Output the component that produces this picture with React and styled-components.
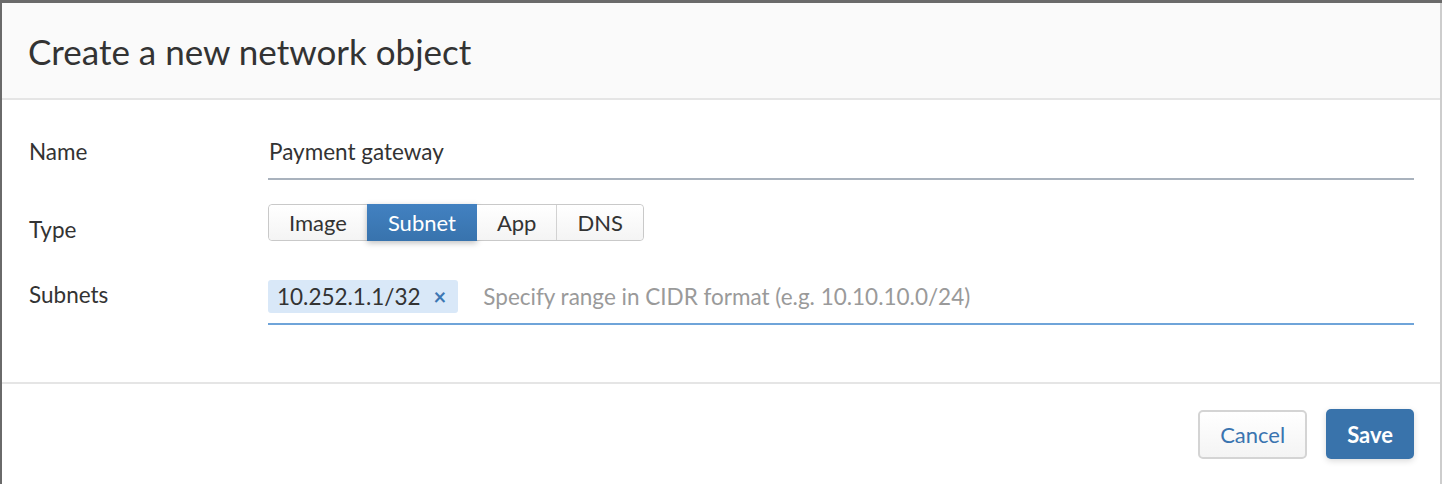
import React from 'react';
import styled, { createGlobalStyle } from 'styled-components';

const GlobalStyle = createGlobalStyle`
  html, body {
    margin: 0;
    padding: 0;
    background: #6a6a6a;
    font-family: Lato, 'Open Sans', sans-serif;
    color: #333;
  }
`;

const Modal = styled.div`
  margin: 3px 0 0 2px;
  width: 1438px;
  height: 481px;
  background: #fff;
  border-right: 2px solid #cdcdcd;
  display: flex;
  flex-direction: column;
`;

const Header = styled.div`
  height: 95px;
  flex-shrink: 0;
  background: #fafafa;
  border-bottom: 2px solid #e5e5e5;
  display: flex;
  align-items: center;
  padding-left: 26px;
`;

const Title = styled.h2`
  margin: 0;
  font-size: 35px;
  font-weight: 400;
  color: #333;
`;

const Body = styled.div`
  flex: 1;
  padding: 0 26px 0 27px;
  border-bottom: 2px solid #e5e5e5;
  display: flex;
  flex-direction: column;
`;

const Row = styled.div`
  display: flex;
  align-items: flex-start;
  margin-top: ${(p) => p.top}px;
`;

const Label = styled.div`
  width: 239px;
  font-size: 22.5px;
  line-height: 26px;
  padding-top: ${(p) => p.pad || 0}px;
`;

const Field = styled.div`
  flex: 1;
  display: flex;
  align-items: center;
  gap: 25px;
  border-bottom: 2px solid ${(p) => (p.focused ? '#6fa4d9' : '#a9b2bd')};
  padding-bottom: ${(p) => p.bottom}px;
`;

const Value = styled.div`
  font-size: 22.5px;
  line-height: 26px;
  padding-left: 1px;
`;

const Segmented = styled.div`
  display: flex;
  border: 1px solid #c9c9c9;
  border-radius: 4px;
`;

const Segment = styled.div`
  padding: 0 ${(p) => p.pad}px;
  display: flex;
  align-items: center;
  font-size: 22px;
  color: ${(p) => (p.active ? '#fff' : '#333')};
  background: ${(p) =>
    p.active ? 'linear-gradient(#4281c1, #3873ad)' : 'linear-gradient(#fff, #f4f4f4)'};
  box-shadow: ${(p) => (p.active ? '0 2px 6px rgba(0,0,0,0.25)' : 'none')};
  border-left: ${(p) => (p.first || p.active || p.afterActive ? 'none' : '1px solid #d2d2d2')};
  border-radius: ${(p) => (p.first ? '4px 0 0 4px' : p.last ? '0 4px 4px 0' : '0')};
  margin: ${(p) => (p.active ? '-1px 0' : '0')};
  height: ${(p) => (p.active ? '37px' : '35px')};
`;

const Tag = styled.div`
  display: flex;
  align-items: center;
  gap: 13px;
  height: 33px;
  padding: 0 12px 0 9px;
  background: #d9e8f8;
  border-radius: 3px;
  font-size: 22.5px;
  color: #333;
`;

const Remove = styled.span`
  color: #3d77b3;
  font-weight: 700;
  font-size: 22px;
`;

const Placeholder = styled.div`
  font-size: 22.5px;
  color: #9a9a9a;
`;

const Footer = styled.div`
  height: 100px;
  flex-shrink: 0;
  display: flex;
  align-items: center;
  justify-content: flex-end;
  gap: 19px;
  padding-right: 26px;
`;

const Button = styled.button`
  height: ${(p) => (p.primary ? '50px' : '49px')};
  padding: 0 ${(p) => (p.primary ? 21 : 20)}px;
  border-radius: 5px;
  font-family: inherit;
  font-size: 22px;
  font-weight: ${(p) => (p.primary ? 700 : 400)};
  color: ${(p) => (p.primary ? '#fff' : '#3a74b0')};
  background: ${(p) => (p.primary ? '#3973ab' : 'linear-gradient(#fff, #f4f4f4)')};
  border: ${(p) => (p.primary ? 'none' : '2px solid #d4d4d4')};
  box-shadow: ${(p) => (p.primary ? '0 2px 6px rgba(0,0,0,0.15)' : 'none')};
`;

const types = [
  { name: 'Image', pad: 20 },
  { name: 'Subnet', pad: 21, active: true },
  { name: 'App', pad: 20 },
  { name: 'DNS', pad: 20 },
];

export default function App() {
  return (
    <>
      <GlobalStyle />
      <Modal>
        <Header>
          <Title>Create a new network object</Title>
        </Header>
        <Body>
          <Row top={39}>
            <Label>Name</Label>
            <Field bottom={13}>
              <Value>Payment gateway</Value>
            </Field>
          </Row>
          <Row top={24}>
            <Label pad={13}>Type</Label>
            <Segmented>
              {types.map((t, i) => (
                <Segment
                  key={t.name}
                  pad={t.pad}
                  active={t.active}
                  first={i === 0}
                  last={i === types.length - 1}
                  afterActive={i > 0 && types[i - 1].active}
                >
                  {t.name}
                </Segment>
              ))}
            </Segmented>
          </Row>
          <Row top={37}>
            <Label pad={2}>Subnets</Label>
            <Field focused bottom={10}>
              <Tag>
                10.252.1.1/32
                <Remove>×</Remove>
              </Tag>
              <Placeholder>Specify range in CIDR format (e.g. 10.10.10.0/24)</Placeholder>
            </Field>
          </Row>
        </Body>
        <Footer>
          <Button>Cancel</Button>
          <Button primary>Save</Button>
        </Footer>
      </Modal>
    </>
  );
}
